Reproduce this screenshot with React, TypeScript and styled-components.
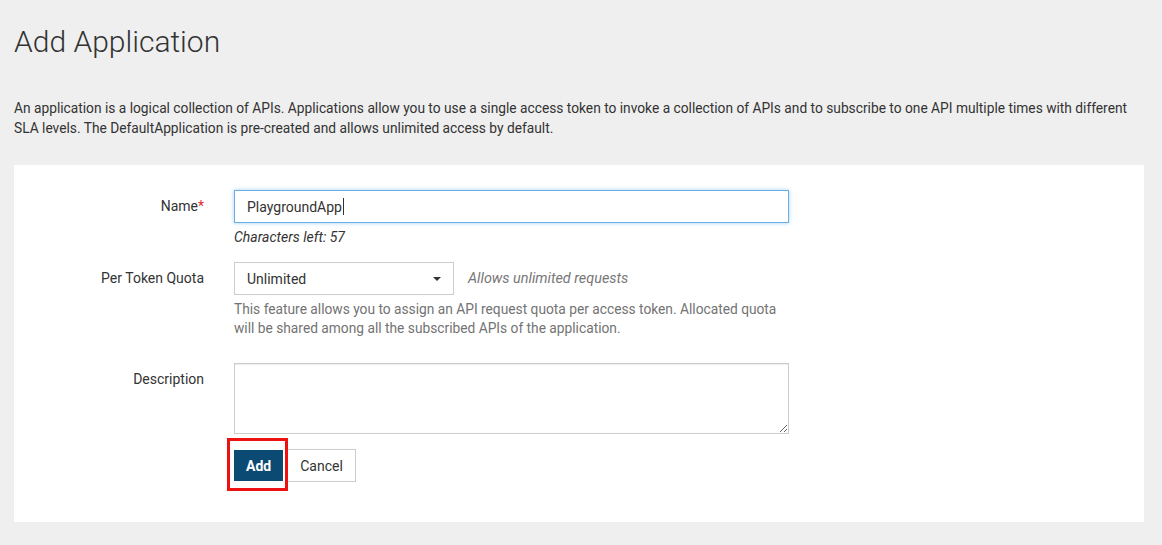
import React from "react";
import styled, { createGlobalStyle } from "styled-components";

const Global = createGlobalStyle`
  html, body { margin: 0; padding: 0; background: #efefef; }
  body { font-family: Roboto, "Liberation Sans", Arial, sans-serif; color: #333; }
  * { box-sizing: border-box; }
`;

const Page = styled.div`
  padding: 0 18px 23px 14px;
  min-height: 545px;
`;

const Title = styled.h1`
  margin: 0;
  padding-top: 24px;
  font-size: 30px;
  font-weight: 300;
  line-height: 36px;
  color: #333;
`;

const Intro = styled.p`
  margin: 38px 0 0;
  font-size: 13.75px;
  line-height: 20px;
  color: #333;
`;

const Card = styled.div`
  background: #fff;
  margin-top: 27px;
  padding: 25px 0 40px;
`;

const Row = styled.div<{ $gap?: number }>`
  display: grid;
  grid-template-columns: 190px 555px;
  column-gap: 30px;
  margin-bottom: ${(p) => p.$gap ?? 0}px;
`;

const Label = styled.label<{ $pt?: number }>`
  text-align: right;
  font-size: 14px;
  line-height: 20px;
  padding-top: ${(p) => p.$pt ?? 7}px;
  color: #333;
`;

const Req = styled.span`
  color: #e02b2b;
`;

const Field = styled.div`
  display: flex;
  flex-direction: column;
`;

const TextInput = styled.div`
  height: 33px;
  border: 1px solid #66afe9;
  box-shadow: 0 0 4px rgba(102, 175, 233, 0.6);
  padding: 0 12px;
  display: flex;
  align-items: center;
  font-size: 14px;
  color: #333;
`;

const Caret = styled.span`
  display: inline-block;
  width: 1px;
  height: 17px;
  background: #333;
  margin-left: 1px;
`;

const Counter = styled.div`
  font-size: 14px;
  font-style: italic;
  line-height: 20px;
  margin-top: 4px;
  color: #333;
`;

const SelectLine = styled.div`
  display: flex;
  align-items: center;
  gap: 14px;
`;

const SelectBox = styled.div`
  width: 220px;
  height: 33px;
  border: 1px solid #ccc;
  display: flex;
  align-items: center;
  justify-content: space-between;
  padding: 0 12px 0 12px;
  font-size: 14px;
  color: #333;
`;

const Arrow = styled.span`
  width: 0;
  height: 0;
  border-left: 4px solid transparent;
  border-right: 4px solid transparent;
  border-top: 4px solid #333;
`;

const Hint = styled.span`
  font-size: 14.4px;
  font-style: italic;
  color: #777;
`;

const Help = styled.div`
  font-size: 13.75px;
  line-height: 19px;
  color: #737373;
  margin-top: 5px;
`;

const TextArea = styled.textarea`
  display: block;
  width: 555px;
  height: 71px;
  border: 1px solid #ccc;
  box-shadow: inset 0 1px 1px rgba(0, 0, 0, 0.075);
  resize: vertical;
  font-family: inherit;
  font-size: 14px;
  outline: none;
`;

const Buttons = styled.div`
  display: flex;
  align-items: center;
  gap: 4px;
  margin-top: 15px;
`;

const Highlight = styled.div`
  position: relative;
  display: inline-flex;
  &::after {
    content: "";
    position: absolute;
    left: -7px;
    top: -12px;
    right: -5px;
    bottom: -10px;
    border: 3px solid #ee1111;
    pointer-events: none;
  }
`;

const Button = styled.button<{ $primary?: boolean }>`
  height: ${(p) => (p.$primary ? 31 : 33)}px;
  padding: 0 ${(p) => (p.$primary ? 11 : 12)}px;
  font-family: inherit;
  font-size: 14px;
  font-weight: ${(p) => (p.$primary ? 700 : 400)};
  color: ${(p) => (p.$primary ? "#fff" : "#333")};
  background: ${(p) => (p.$primary ? "#0b4a72" : "#fff")};
  border: 1px solid ${(p) => (p.$primary ? "#0b4a72" : "#ccc")};
  border-radius: 0;
  cursor: pointer;
`;

export default function App() {
  return (
    <>
      <Global />
      <Page>
        <Title>Add Application</Title>
        <Intro>
          An application is a logical collection of APIs. Applications allow you to use a single access
          token to invoke a collection of APIs and to subscribe to one API multiple times with different
          SLA levels. The DefaultApplication is pre-created and allows unlimited access by default.
        </Intro>
        <Card>
          <Row $gap={15}>
            <Label $pt={6}>
              Name<Req>*</Req>
            </Label>
            <Field>
              <TextInput>
                PlaygroundApp
                <Caret />
              </TextInput>
              <Counter>Characters left: 57</Counter>
            </Field>
          </Row>
          <Row $gap={25}>
            <Label $pt={6}>Per Token Quota</Label>
            <Field>
              <SelectLine>
                <SelectBox>
                  Unlimited
                  <Arrow />
                </SelectBox>
                <Hint>Allows unlimited requests</Hint>
              </SelectLine>
              <Help>
                This feature allows you to assign an API request quota per access token. Allocated quota
                will be shared among all the subscribed APIs of the application.
              </Help>
            </Field>
          </Row>
          <Row>
            <Label $pt={6}>Description</Label>
            <Field>
              <TextArea />
              <Buttons>
                <Highlight>
                  <Button $primary>Add</Button>
                </Highlight>
                <Button>Cancel</Button>
              </Buttons>
            </Field>
          </Row>
        </Card>
      </Page>
    </>
  );
}
